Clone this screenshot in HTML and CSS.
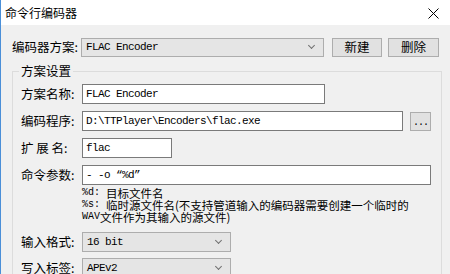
FILE: index.html
```html
<!DOCTYPE html>
<html lang="zh-CN">
  <head>
    <meta charset="UTF-8" />
    <title>命令行编码器</title>
    <link rel="stylesheet" href="styles.css">
  </head>
  <body>
    <div class="window">
      <div class="titlebar">
        <span class="title">命令行编码器</span>
        <svg class="close" width="11" height="11" viewBox="0 0 11 11">
          <path d="M0.5 0.5 L10.5 10.5 M10.5 0.5 L0.5 10.5" stroke="#000" stroke-width="1" fill="none" />
        </svg>
      </div>
      <div class="content">
        <div class="row top-row">
          <label class="label">编码器方案:</label>
          <div class="combo scheme">
            <span class="mono">FLAC Encoder</span>
            <span class="chev"></span>
          </div>
          <button class="btn new">新建</button>
          <button class="btn del">删除</button>
        </div>

        <fieldset class="group">
          <legend>方案设置</legend>
          <div class="row">
            <label class="label small">方案名称:</label>
            <div class="field name"><span class="mono">FLAC Encoder</span></div>
          </div>
          <div class="row">
            <label class="label small">编码程序:</label>
            <div class="field path"><span class="mono">D:\TTPlayer\Encoders\flac.exe</span></div>
            <button class="btn browse">...</button>
          </div>
          <div class="row">
            <label class="label small spaced">扩 展 名:</label>
            <div class="field ext"><span class="mono">flac</span></div>
          </div>
          <div class="row">
            <label class="label small">命令参数:</label>
            <div class="field args"><span class="mono">- -o “%d”</span></div>
          </div>
          <div class="help">
            <div class="help-line"><span class="mono">%d: </span>目标文件名</div>
            <div class="help-line"><span class="mono">%s: </span>临时源文件名(不支持管道输入的编码器需要创建一个临时的</div>
            <div class="help-line"><span class="mono">WAV</span>文件作为其输入的源文件)</div>
          </div>
          <div class="row fmt">
            <label class="label small">输入格式:</label>
            <div class="combo short">
              <span class="mono">16 bit</span>
              <span class="chev"></span>
            </div>
          </div>
          <div class="row tag">
            <label class="label small">写入标签:</label>
            <div class="combo short">
              <span class="mono">APEv2</span>
              <span class="chev"></span>
            </div>
          </div>
        </fieldset>
      </div>
    </div>
  </body>
</html>
```

FILE: styles.css
```css
html,
body {
  margin: 0;
  padding: 0;
  font-family: "Noto Sans CJK SC", sans-serif;
  color: #000;
  background-color: #f0f0f0;
}
.window {
  width: 449px;
  height: 274px;
  overflow: hidden;
  border-left: 1px solid #4a8fd8;
  background-color: #f0f0f0;
}
.titlebar {
  height: 25px;
  background: #ffffff;
  display: flex;
  align-items: center;
  justify-content: space-between;
  padding: 0 11px 0 4px;
}
.title {
  font-size: 12px;
  line-height: 14px;
}
.close {
  display: block;
  margin-top: 1px;
}
.content {
  padding: 12px 0 0 11px;
}
.row {
  display: flex;
  align-items: center;
  height: 20px;
}
.label {
  width: 69px;
  font-size: 12.5px;
  line-height: 16px;
  white-space: nowrap;
}
.label.small {
  width: 61px;
}
.mono {
  font-family: "Liberation Mono", monospace;
  font-size: 11px;
  letter-spacing: -0.6px;
  white-space: pre;
}
.combo {
  box-sizing: border-box;
  height: 20px;
  background: #e5e5e5;
  border: 1px solid #adadad;
  display: flex;
  align-items: center;
  justify-content: space-between;
  padding: 0 5px 0 4px;
}
.combo.scheme {
  width: 243px;
  height: 19px;
}
.combo.short {
  width: 149px;
}
.chev {
  width: 4px;
  height: 4px;
  border-right: 1px solid #707070;
  border-bottom: 1px solid #707070;
  transform: rotate(45deg);
  margin: 0 4px 3px 0;
}
.btn {
  box-sizing: border-box;
  height: 19px;
  background: #e1e1e1;
  border: 1px solid #adadad;
  font-family: "Noto Sans CJK SC", sans-serif;
  font-size: 12.5px;
  line-height: 14px;
  padding: 0;
  color: #000;
}
.btn.new {
  width: 50px;
  margin-left: 8px;
}
.btn.del {
  width: 51px;
  margin-left: 6px;
}
.group {
  width: 430px;
  box-sizing: border-box;
  margin: 7px 0 0 0;
  padding: 6px 0 0 8px;
  border: 1px solid #dcdcdc;
  border-bottom: none;
  height: 220px;
}
.group legend {
  font-size: 12.5px;
  line-height: 14px;
  padding: 0 2px;
  margin-left: -2px;
}
.group .row + .row {
  margin-top: 7px;
}
.field {
  box-sizing: border-box;
  height: 20px;
  background: #ffffff;
  border: 1px solid #7a7a7a;
  display: flex;
  align-items: center;
  padding-left: 3px;
}
.field.name {
  width: 243px;
}
.field.path {
  width: 321px;
}
.field.ext {
  width: 90px;
}
.field.args {
  width: 349px;
}
.btn.browse {
  width: 21px;
  margin-left: 7px;
  font-family: "Liberation Mono", monospace;
  font-size: 10px;
  letter-spacing: -1px;
  line-height: 10px;
  padding-top: 4px;
}
.help {
  margin: 2px 0 0 61px;
  font-size: 11.5px;
  white-space: nowrap;
}
.help-line {
  height: 12px;
  line-height: 12px;
  display: flex;
  align-items: center;
}
.help .mono {
  font-size: 10px;
  line-height: 12px;
  letter-spacing: -0.02px;
}
.group .row.fmt {
  margin-top: 9px;
}
.group .row.tag {
  margin-top: 6px;
}
```
